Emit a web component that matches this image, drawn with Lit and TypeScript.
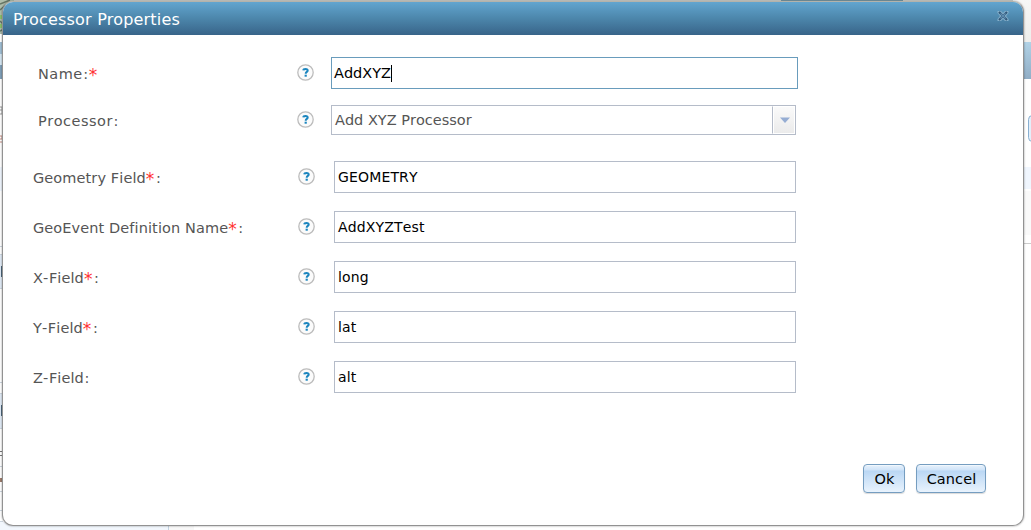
import { LitElement, html, css, svg } from "lit";
import { customElement, property } from "lit/decorators.js";

@customElement("help-icon")
class HelpIcon extends LitElement {
  static styles = css`
    :host { display: block; width: 18px; height: 18px; }
    svg { display: block; }
  `;
  render() {
    return html`<svg width="18" height="18" viewBox="0 0 18 18">
      <circle cx="8.5" cy="8.5" r="7.7" fill="#fbfbfb" stroke="#bcbcbc" stroke-width="1.3" />
      <path d="M6.3 6.4C6.4 5.2 7.4 4.9 8.5 4.9C9.9 4.9 10.7 5.5 10.7 6.4C10.7 7.9 8.7 7.9 8.7 9.7" fill="none" stroke="#1c86bf" stroke-width="2" />
      <rect x="7.6" y="10.7" width="2.2" height="2" fill="#1c86bf" />
    </svg>`;
  }
}

@customElement("field-row")
class FieldRow extends LitElement {
  @property() label = "";
  @property() value = "";
  @property() mark = "";
  @property() kind = "";
  static styles = css`
    :host { display: block; font-kerning: none; }
    .row { display: grid; grid-template-columns: 264px 37px 462px; padding-left: 30px; height: 32px; align-items: center; }
    .top { grid-template-columns: 258px 35px 467px; padding-left: 35px; }
    .select { grid-template-columns: 258px 35px 465px; height: 30px; }
    .label { color: #555; font-size: 14.5px; letter-spacing: 0.1px; line-height: 18px; padding-top: 1px; white-space: pre; }
    .top .label { letter-spacing: 0.5px; padding-top: 2px; }
    .hyphen { margin-right: 0.5px; }
    .star { color: #f33; font-size: 17px; line-height: 0; position: relative; top: 2px; margin: 0 1px 0 0; }
    .colon { margin-left: 0.5px; }
    .box { box-sizing: border-box; height: 32px; border: 1px solid #b5bcc9; background: #fff; padding-left: 3px; display: flex; align-items: center; color: #000; font-size: 14px; letter-spacing: 0.15px; line-height: 30px; }
    .top .box { border-color: #699cbc; padding-left: 2px; font-size: 14.5px; letter-spacing: 0; }
    .caret { width: 1px; height: 17px; background: #000; }
    .select .box { height: 30px; border-color: #b5bcc9; padding-left: 3px; color: #555; justify-content: space-between; line-height: 28px; }
    .arrow { box-sizing: border-box; width: 23px; height: 28px; border: 1px solid #fff; border-left: 1px solid #b5bcc9; background: linear-gradient(#fafafa, #ebebeb); box-shadow: inset 1px 0 #fff; display: flex; align-items: center; justify-content: center; padding-left: 2px; }
    help-icon { margin-left: 1px; }
  `;
  render() {
    const star = html`<span class="star">*</span>`;
    const colon = html`<span class="colon">:</span>`;
    const parts = this.label.split("-");
    const text = parts.length > 1 ? html`${parts[0]}<span class="hyphen">-</span>${parts[1]}` : this.label;
    const cls = this.kind === "select" ? "row top select" : this.kind === "focus" ? "row top" : "row";
    return html`<div class=${cls}>
      <div class="label">${text}${this.mark === "after" ? html`${colon}${star}` : this.mark ? html`${star}${colon}` : colon}</div>
      <help-icon></help-icon>
      <div class="box"><span>${this.value}</span>${this.kind === "focus" ? html`<span class="caret"></span>` : ""}${this.kind === "select"
        ? html`<span class="arrow"><svg width="10" height="6"><path d="M0 .5H10L5 6Z" fill="#96add3" /></svg></span>` : ""}</div>
    </div>`;
  }
}

@customElement("app-root")
class AppRoot extends LitElement {
  static styles = css`
    :host { display: block; width: 1031px; height: 530px; overflow: hidden; font-family: Verdana, "DejaVu Sans", sans-serif; }
    .page { box-sizing: border-box; width: 1031px; height: 530px; padding: 1px 0 0 2px; position: relative; background: #fff; }
    .backdrop { position: absolute; inset: 0; width: 1031px; height: 530px; }
    .dialog { position: relative; box-sizing: border-box; width: 1022px; height: 525px; border: 1px solid #929292; border-top-color: #b3b3ac; border-radius: 11px; background: #fff; overflow: hidden; }
    .shade { width: 1022px; height: 525px; border-radius: 11px; box-shadow: 0 0 2px rgba(0,0,0,.45); position: relative; }
    .header { box-sizing: border-box; height: 33px; background: linear-gradient(#62a5cf, #4c86ab 50%, #386489); display: flex; justify-content: space-between; padding: 0 14px 0 10px; color: #fff; }
    .title { font-size: 16px; line-height: 35px; letter-spacing: .2px; }
    .close { margin-top: 8px; width: 12px; height: 12px; }
    .form { padding-top: 22px; height: 358px; }
    .select { margin-top: 16px; margin-bottom: 26px; display: block; }
    .fields { display: flex; flex-direction: column; gap: 18px; }
    .footer { display: flex; justify-content: flex-end; gap: 11px; padding: 49px 37px 0 0; }
    .btn { box-sizing: border-box; height: 29px; width: 42px; border: 1px solid #759dc0; border-radius: 4px; background: linear-gradient(#fff 0, #e3effb 1px, #cfe3f8 5px, #bad7f4 6px, #e9f3fd 100%); box-shadow: 0 1px 1px rgba(0,0,0,.15); display: flex; align-items: center; justify-content: center; font: 14.5px/27px Verdana, "DejaVu Sans", sans-serif; color: #000; padding: 1px 0 0 1px; }
    .wide { width: 70px; letter-spacing: .1px; }
  `;
  backdrop() {
    const lines = [246, 254, 288, 382, 393, 428, 466, 491, 510, 521];
    return html`<svg class="backdrop" viewBox="0 0 1031 530">
      <defs>
        <linearGradient id="b" x2="0" y2="1"><stop stop-color="#b1d2e6" /><stop offset="1" stop-color="#91aec6" /></linearGradient>
        <linearGradient id="g" x2="0" y2="1"><stop stop-color="#f7f7f6" /><stop offset="1" stop-color="#eeeeec" /></linearGradient>
      </defs>
      <rect width="1031" height="2" fill="#cfd1cc" />
      <rect x="781" width="122" height="2" fill="#7898a6" />
      <rect width="14" height="34" fill="#aebdab" />
      <path d="M0 4L10 0M0 10L8 3M0 21L4 25M0 31L4 29" stroke="#657565" stroke-width="1.5" />
      <path d="M0 17H4M0 26H4" stroke="#8bc06b" stroke-width="4" />
      <rect y="42" width="4" height="12" fill="#9fbed3" />
      <rect y="54" width="4" height="11" fill="#d4e6f2" />
      <rect y="65" width="4" height="14" fill="#7f9fb8" />
      <path d="M0 107H2V114H0M0 110H2" fill="none" stroke="#999" />
      <path d="M0 136H2V139H0M0 142H2" fill="none" stroke="#c08a80" />
      <rect y="167" width="3" height="24" fill="#eff5fd" />
      <rect y="254" width="3" height="35" fill="#e0eaf5" />
      <rect y="393" width="3" height="35" fill="#e0eaf5" />
      ${lines.map((y) => svg`<rect y=${y} width="3" height="1" fill="#ccd5df" />`)}
      <rect x="1" y="266" width="2" height="11" fill="#4b667b" />
      <rect x="1" y="405" width="2" height="11" fill="#4b667b" />
      <path d="M0 451.500H3M0 455.500H2" stroke="#777" />
      <rect y="478" width="2" height="4" fill="#9c7c6c" />
      <rect y="522" width="168" height="8" fill="#f2f7fd" />
      <rect x="168" y="522" width="1" height="8" fill="#c3d3e2" />
      <rect x="169" y="522" width="25" height="8" fill="#f8f8f8" />
      <rect x="1013" width="18" height="42" fill="url(#g)" />
      <rect x="1023" y="42" width="8" height="37" fill="url(#b)" />
      <rect x="1028.500" y="115.500" width="12" height="26" rx="4" fill="#e3effa" stroke="#88afd1" />
      <rect x="1024" y="167" width="7" height="22" fill="#f0f6fe" />
      <rect x="1024" y="191" width="7" height="44" fill="#fafafa" />
      <rect x="1024" y="243" width="7" height="1" fill="#ccc" />
    </svg>`;
  }
  render() {
    return html`<div class="page">
      ${this.backdrop()}
      <div class="shade"><div class="dialog">
        <div class="header">
          <div class="title">Processor Properties</div>
          <svg class="close" viewBox="0 0 12 12"><path d="M.5 1H4L6 3L8 1H11.500V3L9 6L11.500 9V11H8L6 9L4 11H.5V9L3 6L.5 3Z" fill="#86b1cc" /><path d="M2 2L10 10M10 2L2 10" stroke="#315778" stroke-width="2.200" /><path d="M3.500 3.500L8.500 8.500M8.500 3.500L3.500 8.500" stroke="#5d8cb0" stroke-width="1.200" /></svg>
        </div>
        <div class="form">
          <field-row label="Name" value="AddXYZ" mark="after" kind="focus"></field-row>
          <field-row class="select" label="Processor" value="Add XYZ Processor" kind="select"></field-row>
          <div class="fields">
            <field-row label="Geometry Field" value="GEOMETRY" mark="before"></field-row>
            <field-row label="GeoEvent Definition Name" value="AddXYZTest" mark="before"></field-row>
            <field-row label="X-Field" value="long" mark="before"></field-row>
            <field-row label="Y-Field" value="lat" mark="before"></field-row>
            <field-row label="Z-Field" value="alt"></field-row>
          </div>
        </div>
        <div class="footer"><button class="btn">Ok</button><button class="btn wide">Cancel</button></div>
      </div></div>
    </div>`;
  }
}
